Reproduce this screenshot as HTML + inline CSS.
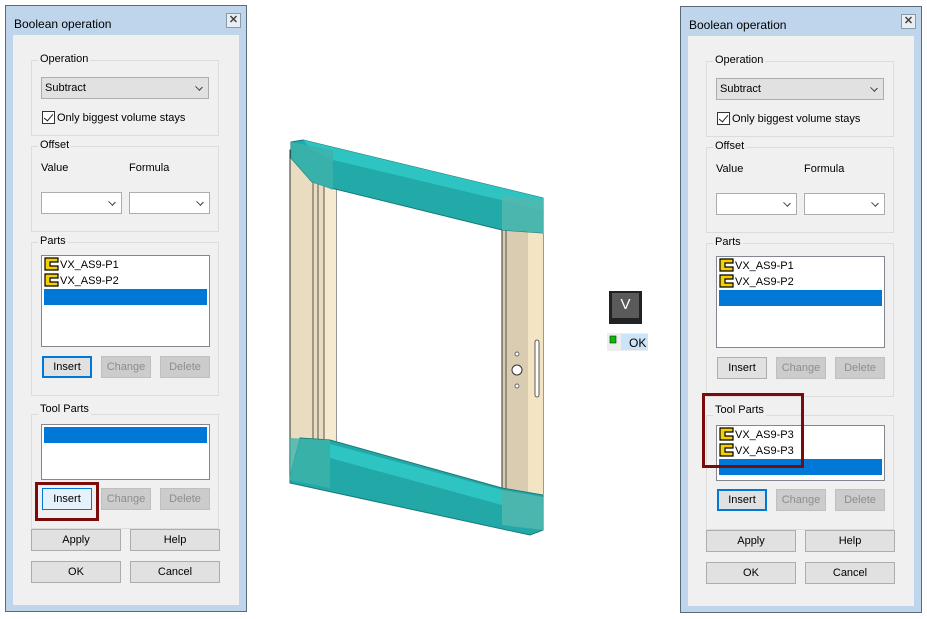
<!DOCTYPE html>
<html><head><meta charset="utf-8"><style>
*{margin:0;padding:0;box-sizing:border-box}
body{width:927px;height:619px;background:#fff;position:relative;overflow:hidden;font-family:"Liberation Sans",Arial,sans-serif;font-size:11px;color:#000}
.a{position:absolute}
.dlg{position:absolute;width:242px;height:607px;border:1px solid #5a6a78;background:#bfd5ec}
.title{left:8px;top:11px;font-size:12px}
.close{left:220px;top:7px;width:15px;height:15px;border:1px solid #8a9aaa;background:#e8eef4;font-size:11px;line-height:12px;text-align:center;color:#444;font-weight:bold}
.panel{left:7px;top:29px;width:226px;height:570px;background:#f0f0f0}
.grp{position:absolute;border:1px solid #dcdcdc}
.lbl{position:absolute;background:#f0f0f0;padding:0 2px;font-size:11px;line-height:14px}
.sel{position:absolute;border:1px solid #adadad;background:#fff;height:22px}
.sel.g{background:#e1e1e1}
.sel span{position:absolute;left:3px;top:4px}
.chev{position:absolute;right:6px;top:6px;width:6px;height:6px;border-right:1px solid #333;border-bottom:1px solid #333;transform:rotate(45deg) scale(1,0.8)}
.list{position:absolute;border:1px solid #828790;background:#fff}
.hl{position:absolute;background:#0078d7;left:2px;right:2px;height:16px}
.it{position:absolute;left:2px;height:16px;line-height:16px;font-size:11px}
.it svg{vertical-align:-3px;margin-right:1px}
.btn{position:absolute;height:22px;border:1px solid #adadad;background:#e1e1e1;text-align:center;line-height:20px;font-size:11px}
.btn.d{color:#8d8d8d;background:#cccccc;border-color:#bfbfbf}
.btn.f{border:2px solid #0078d7;line-height:18px}
.btn.h{border:1px solid #0078d7;background:#e5f1fb}
.red{position:absolute;border:3px solid #7b0a0a}
</style></head><body>

<!-- LEFT DIALOG -->
<div class="dlg" style="left:5px;top:5px">
<div class="a title">Boolean operation</div>
<div class="a close">✕</div>
<div class="a panel"></div>
<div class="grp" style="left:25px;top:54px;width:188px;height:76px"></div>
<div class="lbl" style="left:32px;top:46px">Operation</div>
<div class="sel g" style="left:35px;top:71px;width:168px"><span>Subtract</span><div class="chev"></div></div>
<div class="a" style="left:36px;top:105px;width:13px;height:13px;border:1px solid #333;background:#fff"><div class="a" style="left:3px;top:0px;width:5px;height:9px;border-right:1.5px solid #222;border-bottom:1.5px solid #222;transform:rotate(40deg)"></div></div>
<div class="a" style="left:51px;top:106px">Only biggest volume stays</div>
<div class="grp" style="left:25px;top:140px;width:188px;height:86px"></div>
<div class="lbl" style="left:32px;top:132px">Offset</div>
<div class="a" style="left:35px;top:156px">Value</div>
<div class="a" style="left:123px;top:156px">Formula</div>
<div class="sel" style="left:35px;top:186px;width:81px"><div class="chev"></div></div>
<div class="sel" style="left:123px;top:186px;width:81px"><div class="chev"></div></div>
<div class="grp" style="left:25px;top:236px;width:188px;height:154px"></div>
<div class="lbl" style="left:32px;top:228px">Parts</div>
<div class="list" style="left:35px;top:249px;width:169px;height:92px">
 <div class="it" style="top:1px"><svg width="15" height="14" viewBox="0 0 15 14"><path d="M1 1H14V5H6V9H14V13H1Z" fill="#f4d000" stroke="#000" stroke-width="1.2"/></svg>VX_AS9-P1</div>
 <div class="it" style="top:17px"><svg width="15" height="14" viewBox="0 0 15 14"><path d="M1 1H14V5H6V9H14V13H1Z" fill="#f4d000" stroke="#000" stroke-width="1.2"/></svg>VX_AS9-P2</div>
 <div class="hl" style="top:33px"></div>
</div>
<div class="btn f" style="left:36px;top:350px;width:50px">Insert</div>
<div class="btn d" style="left:95px;top:350px;width:50px">Change</div>
<div class="btn d" style="left:154px;top:350px;width:50px">Delete</div>
<div class="grp" style="left:25px;top:408px;width:188px;height:115px"></div>
<div class="lbl" style="left:32px;top:396px">Tool Parts</div>
<div class="list" style="left:35px;top:418px;width:169px;height:56px"><div class="hl" style="top:2px"></div></div>
<div class="btn h" style="left:36px;top:482px;width:50px">Insert</div>
<div class="btn d" style="left:95px;top:482px;width:50px">Change</div>
<div class="btn d" style="left:154px;top:482px;width:50px">Delete</div>
<div class="red" style="left:29px;top:476px;width:64px;height:39px"></div>
<div class="btn" style="left:25px;top:523px;width:90px">Apply</div>
<div class="btn" style="left:124px;top:523px;width:90px">Help</div>
<div class="btn" style="left:25px;top:555px;width:90px">OK</div>
<div class="btn" style="left:124px;top:555px;width:90px">Cancel</div>
</div>

<!-- RIGHT DIALOG -->
<div class="dlg" style="left:680px;top:6px">
<div class="a title">Boolean operation</div>
<div class="a close">✕</div>
<div class="a panel"></div>
<div class="grp" style="left:25px;top:54px;width:188px;height:76px"></div>
<div class="lbl" style="left:32px;top:46px">Operation</div>
<div class="sel g" style="left:35px;top:71px;width:168px"><span>Subtract</span><div class="chev"></div></div>
<div class="a" style="left:36px;top:105px;width:13px;height:13px;border:1px solid #333;background:#fff"><div class="a" style="left:3px;top:0px;width:5px;height:9px;border-right:1.5px solid #222;border-bottom:1.5px solid #222;transform:rotate(40deg)"></div></div>
<div class="a" style="left:51px;top:106px">Only biggest volume stays</div>
<div class="grp" style="left:25px;top:140px;width:188px;height:86px"></div>
<div class="lbl" style="left:32px;top:132px">Offset</div>
<div class="a" style="left:35px;top:156px">Value</div>
<div class="a" style="left:123px;top:156px">Formula</div>
<div class="sel" style="left:35px;top:186px;width:81px"><div class="chev"></div></div>
<div class="sel" style="left:123px;top:186px;width:81px"><div class="chev"></div></div>
<div class="grp" style="left:25px;top:236px;width:188px;height:154px"></div>
<div class="lbl" style="left:32px;top:228px">Parts</div>
<div class="list" style="left:35px;top:249px;width:169px;height:92px">
 <div class="it" style="top:1px"><svg width="15" height="14" viewBox="0 0 15 14"><path d="M1 1H14V5H6V9H14V13H1Z" fill="#f4d000" stroke="#000" stroke-width="1.2"/></svg>VX_AS9-P1</div>
 <div class="it" style="top:17px"><svg width="15" height="14" viewBox="0 0 15 14"><path d="M1 1H14V5H6V9H14V13H1Z" fill="#f4d000" stroke="#000" stroke-width="1.2"/></svg>VX_AS9-P2</div>
 <div class="hl" style="top:33px"></div>
</div>
<div class="btn" style="left:36px;top:350px;width:50px">Insert</div>
<div class="btn d" style="left:95px;top:350px;width:50px">Change</div>
<div class="btn d" style="left:154px;top:350px;width:50px">Delete</div>
<div class="grp" style="left:25px;top:408px;width:188px;height:115px"></div>
<div class="lbl" style="left:32px;top:396px">Tool Parts</div>
<div class="list" style="left:35px;top:418px;width:169px;height:56px">
 <div class="it" style="top:1px"><svg width="15" height="14" viewBox="0 0 15 14"><path d="M1 1H14V5H6V9H14V13H1Z" fill="#f4d000" stroke="#000" stroke-width="1.2"/></svg>VX_AS9-P3</div>
 <div class="it" style="top:17px"><svg width="15" height="14" viewBox="0 0 15 14"><path d="M1 1H14V5H6V9H14V13H1Z" fill="#f4d000" stroke="#000" stroke-width="1.2"/></svg>VX_AS9-P3</div>
 <div class="hl" style="top:33px"></div>
</div>
<div class="btn f" style="left:36px;top:482px;width:50px">Insert</div>
<div class="btn d" style="left:95px;top:482px;width:50px">Change</div>
<div class="btn d" style="left:154px;top:482px;width:50px">Delete</div>
<div class="red" style="left:21px;top:386px;width:102px;height:75px"></div>
<div class="btn" style="left:25px;top:523px;width:90px">Apply</div>
<div class="btn" style="left:124px;top:523px;width:90px">Help</div>
<div class="btn" style="left:25px;top:555px;width:90px">OK</div>
<div class="btn" style="left:124px;top:555px;width:90px">Cancel</div>
</div>

<!-- 3D FRAME -->
<svg class="a" style="left:0;top:0" width="927" height="619" viewBox="0 0 927 619">
 <polygon points="290,150 336,160 336,490 290,481" fill="#e9dcc0" stroke="#333" stroke-width="1"/>
 <line x1="313" y1="160" x2="313" y2="485" stroke="#333" stroke-width=".8"/>
 <line x1="318" y1="160" x2="318" y2="485" stroke="#333" stroke-width=".8"/>
 <rect x="324" y="180" width="12" height="265" fill="#f6ead0"/>
 <line x1="324" y1="180" x2="324" y2="445" stroke="#333" stroke-width=".8"/>
 <polygon points="502,225 543,232 543,505 502,497" fill="#d9ccb0" stroke="#333" stroke-width="1"/>
 <rect x="528" y="232" width="15" height="270" fill="#f3e4c4"/>
 <line x1="506" y1="226" x2="506" y2="497" stroke="#333" stroke-width=".8"/>
 <circle cx="517" cy="370" r="5" fill="#fff" stroke="#333"/>
 <circle cx="517" cy="354" r="2" fill="#fff" stroke="#333" stroke-width=".7"/>
 <circle cx="517" cy="386" r="2" fill="#fff" stroke="#333" stroke-width=".7"/>
 <rect x="535" y="340" width="4" height="57" rx="2" fill="#fff" stroke="#333" stroke-width=".8"/>
 <polygon points="291,142 303,140 543,198 543,233 502,230 331,188 312,182 291,158" fill="#22aaa8" stroke="#167a7a" stroke-width="1"/>
 <polygon points="303,140 543,198 543,210 333,160 312,150" fill="#2ec4c2"/>
 <polygon points="291,142 333,150 333,190 312,182 291,158" fill="#3fb3aa" opacity=".8"/>
 <polygon points="502,195 543,200 543,233 502,230" fill="#52b8ae" opacity=".85"/>
 <polygon points="300,438 330,440 502,488 543,495 543,530 530,535 290,483 290,477" fill="#22a8a6" stroke="#167a7a" stroke-width="1"/>
 <polygon points="330,444 502,490 502,505 330,458" fill="#2ec4c2"/>
 <polygon points="290,438 330,440 330,488 290,480" fill="#3fb3aa" opacity=".8"/>
 <polygon points="502,490 543,497 543,530 502,525" fill="#52b8ae" opacity=".85"/>
 <rect x="609" y="291" width="33" height="33" fill="#222"/>
 <rect x="612" y="293" width="27" height="25" fill="#5a5a5a"/>
 <text x="625.5" y="309" font-family="Liberation Sans,sans-serif" font-size="15" fill="#fff" text-anchor="middle">V</text>
 <rect x="607" y="333" width="41" height="18" fill="#eeeeee"/>
 <rect x="621" y="334" width="27" height="16" fill="#cce4f7"/>
 <rect x="610" y="336" width="6" height="7" fill="#00c000" stroke="#222" stroke-width=".6"/>
 <text x="629" y="347" font-family="Liberation Sans,sans-serif" font-size="12" fill="#000">OK</text>
</svg>
</body></html>
